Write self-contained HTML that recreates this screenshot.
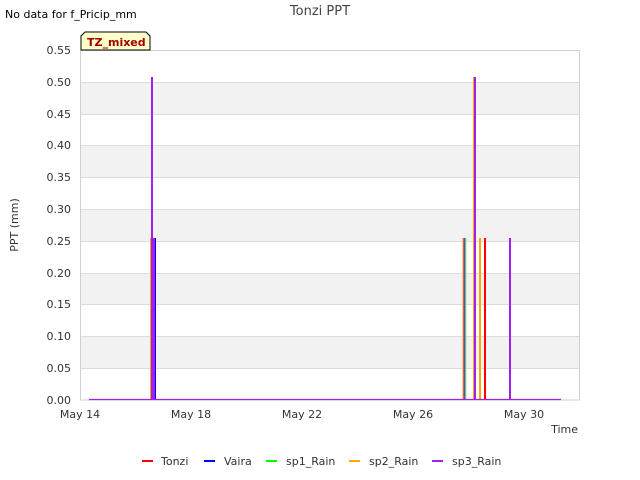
<!DOCTYPE html>
<html><head><meta charset="utf-8"><style>
body{margin:0;background:#fff;}
svg{display:block;font-family:"DejaVu Sans","Liberation Sans",sans-serif;}
</style></head><body>
<svg width="640" height="480" viewBox="0 0 640 480">
<rect width="640" height="480" fill="#fff"/>
<g fill="#f2f2f2">
<rect x="80" y="82" width="500" height="32"/>
<rect x="80" y="145" width="500" height="32"/>
<rect x="80" y="209" width="500" height="32"/>
<rect x="80" y="273" width="500" height="32"/>
<rect x="80" y="336" width="500" height="32"/>
</g>
<g stroke="#dcdcdc" stroke-width="1">
<line x1="80" x2="580" y1="82.5" y2="82.5"/>
<line x1="80" x2="580" y1="114.5" y2="114.5"/>
<line x1="80" x2="580" y1="145.5" y2="145.5"/>
<line x1="80" x2="580" y1="177.5" y2="177.5"/>
<line x1="80" x2="580" y1="209.5" y2="209.5"/>
<line x1="80" x2="580" y1="241.5" y2="241.5"/>
<line x1="80" x2="580" y1="273.5" y2="273.5"/>
<line x1="80" x2="580" y1="304.5" y2="304.5"/>
<line x1="80" x2="580" y1="336.5" y2="336.5"/>
<line x1="80" x2="580" y1="368.5" y2="368.5"/>
</g>
<rect x="80.5" y="50.5" width="499" height="349.5" fill="none" stroke="#d0d0d0"/>
<rect x="150" y="238" width="2" height="162" fill="#ffa500"/>
<rect x="154" y="238" width="2" height="162" fill="#0000ff"/>
<rect x="151" y="238" width="4" height="162" fill="#a020f0"/>
<rect x="151" y="77" width="2" height="323" fill="#a020f0"/>
<rect x="462.5" y="238" width="1" height="162" fill="#ffa500"/>
<rect x="463.5" y="238" width="1.7" height="162" fill="#a020f0"/>
<rect x="465.2" y="238" width="1" height="162" fill="#00ff00"/>
<rect x="473" y="77" width="1" height="323" fill="#ffa500"/>
<rect x="474" y="77" width="2" height="323" fill="#a020f0"/>
<rect x="479" y="238" width="2" height="162" fill="#ffa500"/>
<rect x="484" y="238" width="2" height="162" fill="#ff0000"/>
<rect x="509" y="238" width="2" height="162" fill="#a020f0"/>
<line x1="89" x2="561" y1="399.5" y2="399.5" stroke="#a020f0" stroke-width="1.2"/>
<g font-size="11" fill="#333" text-anchor="end">
<text x="71" y="54">0.55</text><text x="71" y="86">0.50</text><text x="71" y="118">0.45</text>
<text x="71" y="149">0.40</text><text x="71" y="181">0.35</text><text x="71" y="213">0.30</text>
<text x="71" y="245">0.25</text><text x="71" y="277">0.20</text><text x="71" y="308">0.15</text>
<text x="71" y="340">0.10</text><text x="71" y="372">0.05</text><text x="71" y="404">0.00</text>
</g>
<g font-size="11" fill="#333" text-anchor="middle">
<text x="80" y="418">May 14</text><text x="191" y="418">May 18</text><text x="302" y="418">May 22</text>
<text x="413" y="418">May 26</text><text x="524" y="418">May 30</text>
</g>
<text x="578" y="433" font-size="11" fill="#333" text-anchor="end">Time</text>
<text x="18" y="225" font-size="11" fill="#333" text-anchor="middle" transform="rotate(-90 18 225)">PPT (mm)</text>
<text x="320" y="15" font-size="13" fill="#444" text-anchor="middle">Tonzi PPT</text>
<text x="5" y="18" font-size="11" fill="#000">No data for f_Pricip_mm</text>
<path d="M81 50 L81 36 L85 32 L146 32 L150 36 L150 50 Z" fill="#ffffcc" stroke="#000" stroke-width="1"/>
<text x="87" y="46" font-size="11" font-weight="bold" fill="#a00000">TZ_mixed</text>
<g stroke-width="2">
<line x1="142" x2="153" y1="461" y2="461" stroke="#ff0000"/>
<line x1="204" x2="215" y1="461" y2="461" stroke="#0000ff"/>
<line x1="266" x2="277" y1="461" y2="461" stroke="#00ff00"/>
<line x1="349" x2="360" y1="461" y2="461" stroke="#ffa500"/>
<line x1="432" x2="443" y1="461" y2="461" stroke="#a020f0"/>
</g>
<g font-size="11" fill="#333">
<text x="161" y="465">Tonzi</text><text x="224" y="465">Vaira</text><text x="286" y="465">sp1_Rain</text>
<text x="369" y="465">sp2_Rain</text><text x="452" y="465">sp3_Rain</text>
</g>
</svg>
</body></html>
